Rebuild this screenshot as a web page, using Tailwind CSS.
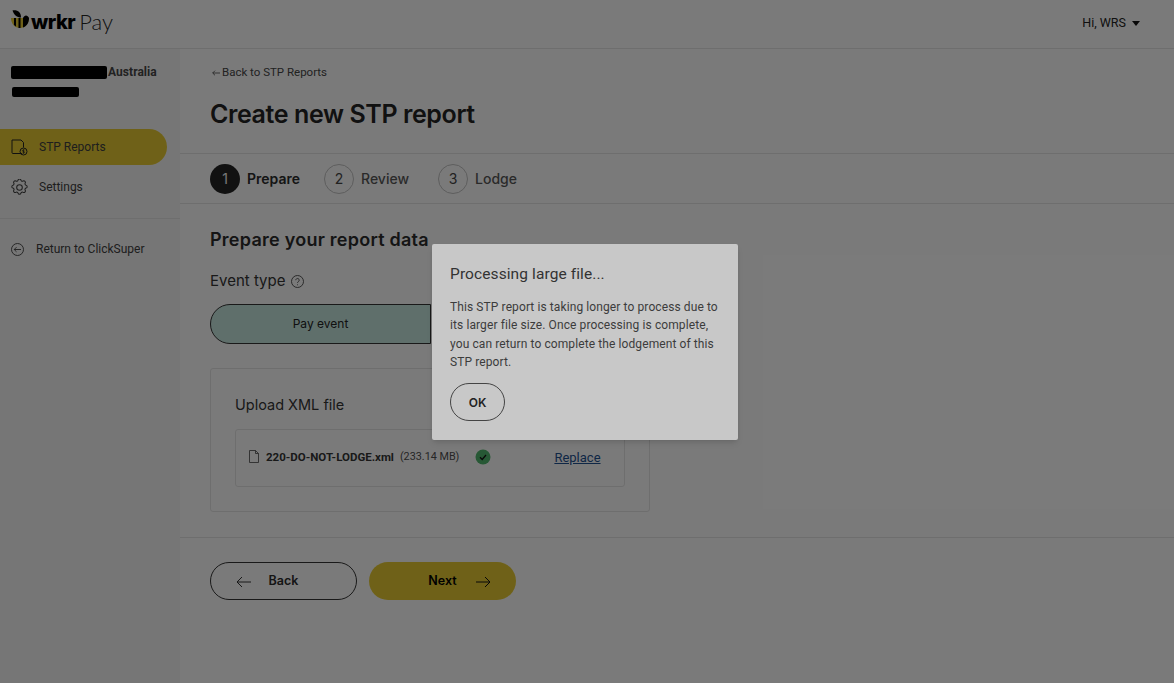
<!DOCTYPE html>
<html lang="en">
<head>
  <meta charset="UTF-8" />
  <meta name="viewport" content="width=device-width, initial-scale=1.0"/>
  <title>Create new STP report</title>
  <script src="https://cdn.jsdelivr.net/npm/@tailwindcss/browser@4"></script>
</head>
<body class="relative h-[683px] w-[1174px] overflow-hidden bg-[#f5f5f5] font-['Roboto',sans-serif] text-[#3c3c3c]">

  <!-- top bar -->
  <header class="flex h-[49px] items-center justify-between border-b border-[#dcdcdc] bg-[#f5f5f5] pl-[11px] pr-[34px]">
    <div class="flex items-center pb-[4px]">
      <svg class="mb-[7px] mr-[2px] h-[20px] w-[18px]" viewBox="0 0 18 20">
        <path d="M0 9h18c0 6-4 10-9 10S0 15 0 9z" fill="#dec330"/>
        <path d="M3 9h2v8.500l-2-1.500zM7.500 9h2v10h-2zM12 9h6c0 5-2.500 8.500-6 9.500z" fill="#000"/>
        <path d="M12 9c.5-1.500 2-2.500 3-2.500S17.500 7.500 18 9z" fill="#000"/>
        <path d="M1.500 1.500C6 .5 10 3 10 8.500 6 8.500 3 6 1.500 1.500z" fill="#000"/>
      </svg>
      <span class="font-['Inter',sans-serif] text-[20px] font-extrabold leading-none tracking-[-0.5px] text-black">wrkr</span>
      <span class="ml-[4px] font-['Lato',sans-serif] text-[22px] font-light leading-none text-[#222]">Pay</span>
    </div>
    <div class="flex items-center gap-[6px] pb-[1px] text-[12.500px] text-[#222]">
      Hi, WRS
      <span class="h-0 w-0 border-x-[4.500px] border-t-[5px] border-x-transparent border-t-[#111]"></span>
    </div>
  </header>

  <div class="flex h-[634px]">
    <!-- sidebar -->
    <aside class="w-[180px] shrink-0 bg-[#ededed] text-[12px]">
      <div class="h-[80px] pl-[11px] pt-[17px]">
        <div class="flex items-center">
          <span class="h-[13px] w-[96px] rounded-[2px] bg-black"></span>
          <span class="ml-px text-[12px] font-bold leading-[13px] tracking-[0.05px] text-[#444]">Australia</span>
        </div>
        <div class="ml-px mt-[8px] h-[10px] w-[67px] rounded-[2px] bg-black"></div>
      </div>
      <nav class="border-b border-[#dcdcdc] pb-[13px]">
        <a class="flex h-[36px] w-[167px] items-center gap-[11px] rounded-r-full bg-[#dec330] pl-[11px]">
          <svg class="h-[17px] w-[17px] text-[#222]" viewBox="0 0 17 17" fill="none" stroke="currentColor" stroke-width="1">
            <path d="M11 14.500H2a1 1 0 0 1-1-1V1h9l2.500 2.500v5"/>
            <circle cx="12.500" cy="12.500" r="3.500"/>
            <path d="M13.500 11h-1.500a.8.8 0 0 0 0 1.500h1a.8.8 0 0 1 0 1.500h-1.500M12.500 10.300v4.400" stroke-width=".7"/>
          </svg>
          <span>STP Reports</span>
        </a>
        <a class="mt-[4px] flex h-[36px] items-center gap-[11px] pl-[11px]">
          <svg class="h-[17px] w-[17px]" viewBox="2 2 20 20" fill="none" stroke="#3c3c3c" stroke-width="1.200" stroke-linecap="round" stroke-linejoin="round">
            <path d="M10.300 3.300c.4-1.800 3-1.800 3.400 0a1.700 1.700 0 0 0 2.600 1.100c1.500-.9 3.300.8 2.400 2.400a1.700 1.700 0 0 0 1 2.500c1.800.4 1.800 3 0 3.400a1.700 1.700 0 0 0-1 2.600c.9 1.500-.9 3.300-2.400 2.400a1.700 1.700 0 0 0-2.600 1c-.4 1.800-3 1.800-3.400 0a1.700 1.700 0 0 0-2.600-1c-1.500.9-3.300-.9-2.400-2.400a1.700 1.700 0 0 0-1-2.600c-1.800-.4-1.800-3 0-3.400a1.700 1.700 0 0 0 1-2.500c-.9-1.600.9-3.300 2.400-2.400a1.700 1.700 0 0 0 2.600-1.100z"/>
            <circle cx="12" cy="12" r="3.300"/>
          </svg>
          <span>Settings</span>
        </a>
      </nav>
      <a class="mt-[20px] flex h-[20px] items-center gap-[12px] pl-[11px]">
        <svg class="h-[13px] w-[13px]" viewBox="0 0 13 13" fill="none" stroke="#3c3c3c" stroke-width=".9">
          <circle cx="6.500" cy="6.500" r="6"/>
          <path d="M10 6.500H3.200M5.500 4.200 3.200 6.500l2.300 2.300"/>
        </svg>
        <span>Return to ClickSuper</span>
      </a>
    </aside>

    <!-- main column -->
    <main class="flex-1">
      <div class="h-[105px] border-b border-[#dcdcdc] px-[30px] pt-[16px]">
        <a class="flex h-[16px] items-center gap-[2px] text-[11.500px] text-[#444]">
          <svg class="ml-[2px] h-[8px] w-[8px]" viewBox="0 0 8 8" fill="none" stroke="#444" stroke-width=".8"><path d="M8 4H.7M3 1.700.7 4 3 6.300"/></svg>
          Back to STP Reports
        </a>
        <h1 class="mt-[17px] font-['Inter',sans-serif] text-[25px] font-semibold leading-[32px] tracking-[-0.4px] text-[#222]">Create new STP report</h1>
      </div>

      <!-- steps -->
      <div class="flex h-[50px] items-center border-b border-[#dcdcdc] px-[30px] font-['Inter',sans-serif] text-[14px] font-medium">
        <div class="flex items-center gap-[7px]">
          <span class="flex h-[30px] w-[30px] items-center justify-center rounded-full bg-[#222] font-normal text-[#eee]">1</span>
          <span class="font-semibold text-[#2a2a2a]">Prepare</span>
        </div>
        <div class="ml-[24px] flex items-center gap-[7px]">
          <span class="flex h-[30px] w-[30px] items-center justify-center rounded-full border border-[#bbb] font-normal text-[#444]">2</span>
          <span class="text-[#555]">Review</span>
        </div>
        <div class="ml-[29px] flex items-center gap-[7px]">
          <span class="flex h-[30px] w-[30px] items-center justify-center rounded-full border border-[#bbb] font-normal text-[#444]">3</span>
          <span class="text-[#555]">Lodge</span>
        </div>
      </div>

      <!-- form -->
      <section class="h-[334px] border-b border-[#dcdcdc] px-[30px]">
        <h2 class="pt-[25px] font-['Inter',sans-serif] text-[18px] font-semibold leading-[22px] tracking-[0.25px] text-[#2a2a2a]">Prepare your report data</h2>
        <div class="mt-[19px] flex h-[22px] items-center gap-[6px] font-['Inter',sans-serif] text-[15px] text-[#333]">
          Event type
          <svg class="h-[13px] w-[13px]" viewBox="0 0 13 13" fill="none" stroke="#444" stroke-width=".9">
            <circle cx="6.500" cy="6.500" r="6"/>
            <path d="M4.800 5.200a1.700 1.700 0 1 1 2.600 1.400c-.6.400-.9.700-.9 1.300"/>
            <circle cx="6.500" cy="9.700" r=".5" fill="#444" stroke="none"/>
          </svg>
        </div>
        <div class="mt-[12px] flex h-[40px] w-[440px]">
          <button class="h-full w-[221px] rounded-l-full border border-[#333] bg-[#bfded7] font-['Inter',sans-serif] text-[12px] text-[#222]">Pay event</button>
        </div>
        <div class="mt-[24px] h-[144px] w-[440px] rounded-[3px] border border-[#dcdcdc] px-[24px] pt-[27px]">
          <h3 class="font-['Inter',sans-serif] text-[14.500px] leading-[18px] text-[#333]">Upload XML file</h3>
          <div class="mt-[15px] flex h-[58px] w-[390px] items-start rounded-[3px] border border-[#dcdcdc] pl-[13px] pt-[19px] text-[11.500px] leading-[16px]">
            <svg class="mt-px h-[13px] w-[10px]" viewBox="0 0 10 13" fill="none" stroke="#444" stroke-width=".8"><path d="M.5.500h6l3 3v9h-9zM6.500.500v3h3"/></svg>
            <span class="ml-[7px] font-bold text-[#333]">220-DO-NOT-LODGE.xml</span>
            <span class="ml-[6px] text-[10.800px] text-[#4c4c4c]">(233.14 MB)</span>
            <svg class="ml-[16px] h-[16px] w-[16px]" viewBox="0 0 16 16"><circle cx="8" cy="8" r="7.500" fill="#4fb06a"/><path d="M5 8.300l2.200 2.200L11 6" fill="none" stroke="#111" stroke-width="1.300"/></svg>
            <a class="ml-[63px] mt-px text-[13px] text-[#1f4e8c] underline">Replace</a>
          </div>
        </div>
      </section>

      <!-- actions -->
      <div class="flex gap-[12px] px-[30px] pt-[24px] font-['Inter',sans-serif] text-[12.500px] font-semibold">
        <button class="relative flex h-[38px] w-[147px] items-center justify-center rounded-full border border-[#333] pt-px text-[#2a2a2a]">
          <svg class="absolute left-[25px] h-[12px] w-[15px]" viewBox="0 0 15 12" fill="none" stroke="#333" stroke-width="1"><path d="M15 6H1M6 1 1 6l5 5"/></svg>
          Back
        </button>
        <button class="relative flex h-[38px] w-[147px] items-center justify-center rounded-full bg-[#dec330] pt-px text-black">
          Next
          <svg class="absolute right-[25px] h-[12px] w-[15px]" viewBox="0 0 15 12" fill="none" stroke="#111" stroke-width="1"><path d="M0 6h14M9 1l5 5-5 5"/></svg>
        </button>
      </div>
    </main>
  </div>

  <!-- dim layer and dialog -->
  <div class="absolute inset-0 bg-black/50"></div>
  <div class="absolute left-[432px] top-[244px] h-[196px] w-[306px] rounded-[2px] bg-[#c8c8c8] px-[18px] pt-[20px] shadow-md">
    <h2 class="text-[15.500px] leading-[20px] tracking-[0.1px] text-[#333]">Processing large file...</h2>
    <p class="mt-[14px] text-[12px] leading-[18.300px] tracking-[0.1px] text-[#3c3c3c]">This STP report is taking longer to process due to its larger file size. Once processing is complete, you can return to complete the lodgement of this STP report.</p>
    <button class="mt-[12px] h-[38px] w-[55px] rounded-full border border-[#444] pt-px font-['Inter',sans-serif] text-[12px] font-semibold text-[#222]">OK</button>
  </div>
</body>
</html>
